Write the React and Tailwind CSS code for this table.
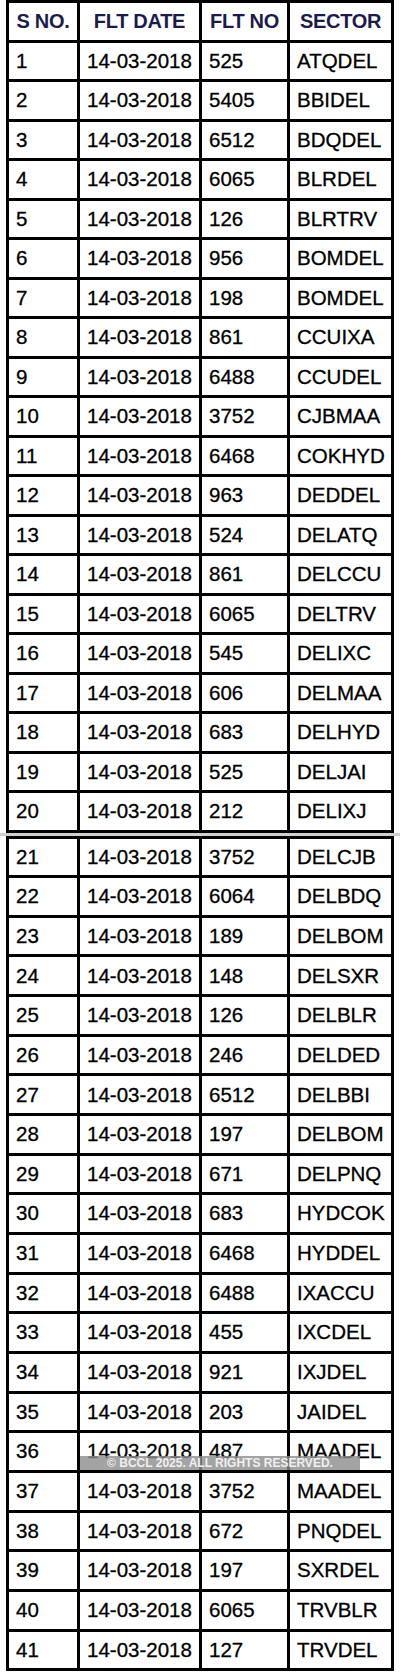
const rows = [
  ["1", "525", "ATQDEL"],
  ["2", "5405", "BBIDEL"],
  ["3", "6512", "BDQDEL"],
  ["4", "6065", "BLRDEL"],
  ["5", "126", "BLRTRV"],
  ["6", "956", "BOMDEL"],
  ["7", "198", "BOMDEL"],
  ["8", "861", "CCUIXA"],
  ["9", "6488", "CCUDEL"],
  ["10", "3752", "CJBMAA"],
  ["11", "6468", "COKHYD"],
  ["12", "963", "DEDDEL"],
  ["13", "524", "DELATQ"],
  ["14", "861", "DELCCU"],
  ["15", "6065", "DELTRV"],
  ["16", "545", "DELIXC"],
  ["17", "606", "DELMAA"],
  ["18", "683", "DELHYD"],
  ["19", "525", "DELJAI"],
  ["20", "212", "DELIXJ"],
  ["21", "3752", "DELCJB"],
  ["22", "6064", "DELBDQ"],
  ["23", "189", "DELBOM"],
  ["24", "148", "DELSXR"],
  ["25", "126", "DELBLR"],
  ["26", "246", "DELDED"],
  ["27", "6512", "DELBBI"],
  ["28", "197", "DELBOM"],
  ["29", "671", "DELPNQ"],
  ["30", "683", "HYDCOK"],
  ["31", "6468", "HYDDEL"],
  ["32", "6488", "IXACCU"],
  ["33", "455", "IXCDEL"],
  ["34", "921", "IXJDEL"],
  ["35", "203", "JAIDEL"],
  ["36", "487", "MAADEL"],
  ["37", "3752", "MAADEL"],
  ["38", "672", "PNQDEL"],
  ["39", "197", "SXRDEL"],
  ["40", "6065", "TRVBLR"],
  ["41", "127", "TRVDEL"],
];

const headers = ["S NO.", "FLT DATE", "FLT NO", "SECTOR"];

function Cell({ children, tall }) {
  return (
    <div
      className={`bg-white flex items-center pl-[7px] text-[20.5px] leading-none text-black whitespace-nowrap [-webkit-text-stroke:0.3px_black] ${
        tall ? "h-[36.67px]" : "h-[36.5px]"
      }`}
    >
      {children}
    </div>
  );
}

function Section({ items, withHeader, tall }) {
  return (
    <div className="ml-[6px] w-[388px] border-[3px] border-black bg-black grid grid-cols-[68px_119px_85px_101px] gap-[3px]">
      {withHeader &&
        headers.map((h) => (
          <div
            key={h}
            className="bg-white h-[36.5px] flex items-center justify-center text-[20px] font-bold leading-none tracking-[-0.3px] text-[#1b1b4d] whitespace-nowrap"
          >
            {h}
          </div>
        ))}
      {items.map(([n, no, sector]) => (
        <div key={n} className="contents">
          <Cell tall={tall}>{n}</Cell>
          <Cell tall={tall}>14-03-2018</Cell>
          <Cell tall={tall}>{no}</Cell>
          <Cell tall={tall}>{sector}</Cell>
        </div>
      ))}
    </div>
  );
}

export default function App() {
  return (
    <div
      className="relative w-[400px] h-[1675px] bg-white overflow-hidden"
      style={{ fontFamily: '"Liberation Sans", Arial, sans-serif' }}
    >
      <Section items={rows.slice(0, 20)} withHeader />
      <div className="h-[3px] bg-[#cfcfcf]" />
      <Section items={rows.slice(20)} tall />

      {/* watermark band */}
      <div className="absolute left-[80px] top-[1456px] w-[280px] h-[14px] bg-[#8c8c8c]/80 flex items-center justify-center">
        <span className="text-[12px] font-bold leading-none text-[#f0f0f0] whitespace-nowrap">
          © BCCL 2025. ALL RIGHTS RESERVED.
        </span>
      </div>
    </div>
  );
}
